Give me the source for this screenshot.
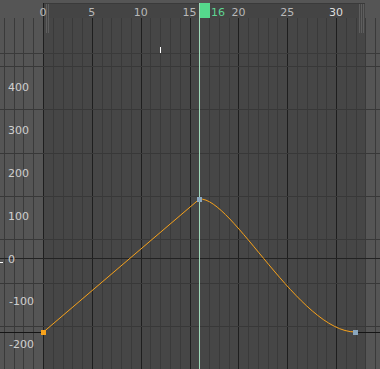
import React from "react";

const X = (f) => 43 + f * 9.77;
const Y = (v) => 258.5 - v * 0.428;

export default function App() {
  const frames = [];
  for (let f = -5; f <= 35; f++) frames.push(f);
  const hLines = [66, 109.3, 152.6, 195.9, 239.2, 282.5, 325.8];
  const labels = [400, 300, 200, 100, 0, -100, -200];
  const rulerNums = [0, 5, 10, 15, 20, 25, 30];
  const font = "'DejaVu Sans', 'Liberation Sans', sans-serif";
  return (
    <div className="w-[380px] h-[369px] overflow-hidden bg-[#555555]">
      <svg width="380" height="369" viewBox="0 0 380 369" className="block">
        {/* range background */}
        <rect x="43" y="3" width="322" height="366" fill="#464646" />
        {/* vertical grid */}
        <g shapeRendering="crispEdges">
          {frames.map((f) => {
            const x = Math.round(X(f)) + 0.5;
            const major = f % 5 === 0 && f >= 0;
            return (
              <line
                key={f}
                x1={x}
                x2={x}
                y1={18}
                y2={369}
                stroke={major ? "#1e1e1e" : "#3a3a3a"}
                strokeWidth="1"
              />
            );
          })}
          {hLines.map((y) => (
            <line key={y} x1="0" x2="380" y1={Math.round(y) + 0.5} y2={Math.round(y) + 0.5} stroke="#383838" />
          ))}
          <line x1="0" x2="380" y1="53.5" y2="53.5" stroke="#3a3a3a" />
          <line x1="0" x2="380" y1="258.5" y2="258.5" stroke="#222222" />
        </g>
        {/* ruler */}
        <rect x="43" y="3" width="322" height="15" fill="#444444" />
        <line x1="43" x2="365" y1="3.5" y2="3.5" stroke="#3a3a3a" shapeRendering="crispEdges" />
        <line x1="43.5" x2="43.5" y1="3" y2="18" stroke="#1e1e1e" shapeRendering="crispEdges" />
        {/* range handles */}
        <g shapeRendering="crispEdges" stroke="#5e5e5e">
          <line x1="46.5" x2="46.5" y1="4" y2="33" />
          <line x1="48.5" x2="48.5" y1="4" y2="33" />
          <line x1="359.5" x2="359.5" y1="4" y2="33" />
          <line x1="361.5" x2="361.5" y1="4" y2="33" />
          <line x1="363.5" x2="363.5" y1="4" y2="33" />
        </g>
        {rulerNums.map((n) => (
          <text
            key={n}
            x={X(n)}
            y="16"
            textAnchor="middle"
            fontSize="11"
            fontFamily={font}
            fill={n === 30 ? "#dedede" : "#b8b8b8"}
          >
            {n}
          </text>
        ))}
        {/* current time */}
        <rect x="199" y="3" width="11" height="15" fill="#55d98c" />
        <line x1="199.5" x2="199.5" y1="3" y2="369" stroke="#9fd8b8" shapeRendering="crispEdges" />
        <text x="211" y="16" fontSize="11" fontFamily={font} fill="#5fd592">
          16
        </text>
        {/* small marks */}
        <rect x="160" y="47" width="1" height="6" fill="#ffffff" />
        <rect x="0" y="262" width="3" height="1" fill="#ffffff" />
        {/* value labels */}
        {labels.map((v) => (
          <text
            key={v}
            x={v < 0 ? 9 : 8}
            y={Y(v) + 4}
            fontSize="11"
            fontFamily={font}
            fill="#cfcfcf"
          >
            {v}
          </text>
        ))}
        {/* infinity lines */}
        <g shapeRendering="crispEdges" stroke="#151515">
          <line x1="0" x2="43" y1="332.5" y2="332.5" />
          <line x1="355" x2="380" y1="332.5" y2="332.5" />
        </g>
        {/* curve */}
        <path
          d="M43.5 332 L199.5 199 C232 197 300 332 355.5 332"
          fill="none"
          stroke="#f7a21b"
          strokeWidth="1"
        />
        <rect x="41" y="330" width="5" height="5" fill="#f7a21b" />
        <rect x="197" y="197" width="5" height="5" fill="#8aa6bd" />
        <rect x="353" y="330" width="5" height="5" fill="#8aa6bd" />
      </svg>
    </div>
  );
}
